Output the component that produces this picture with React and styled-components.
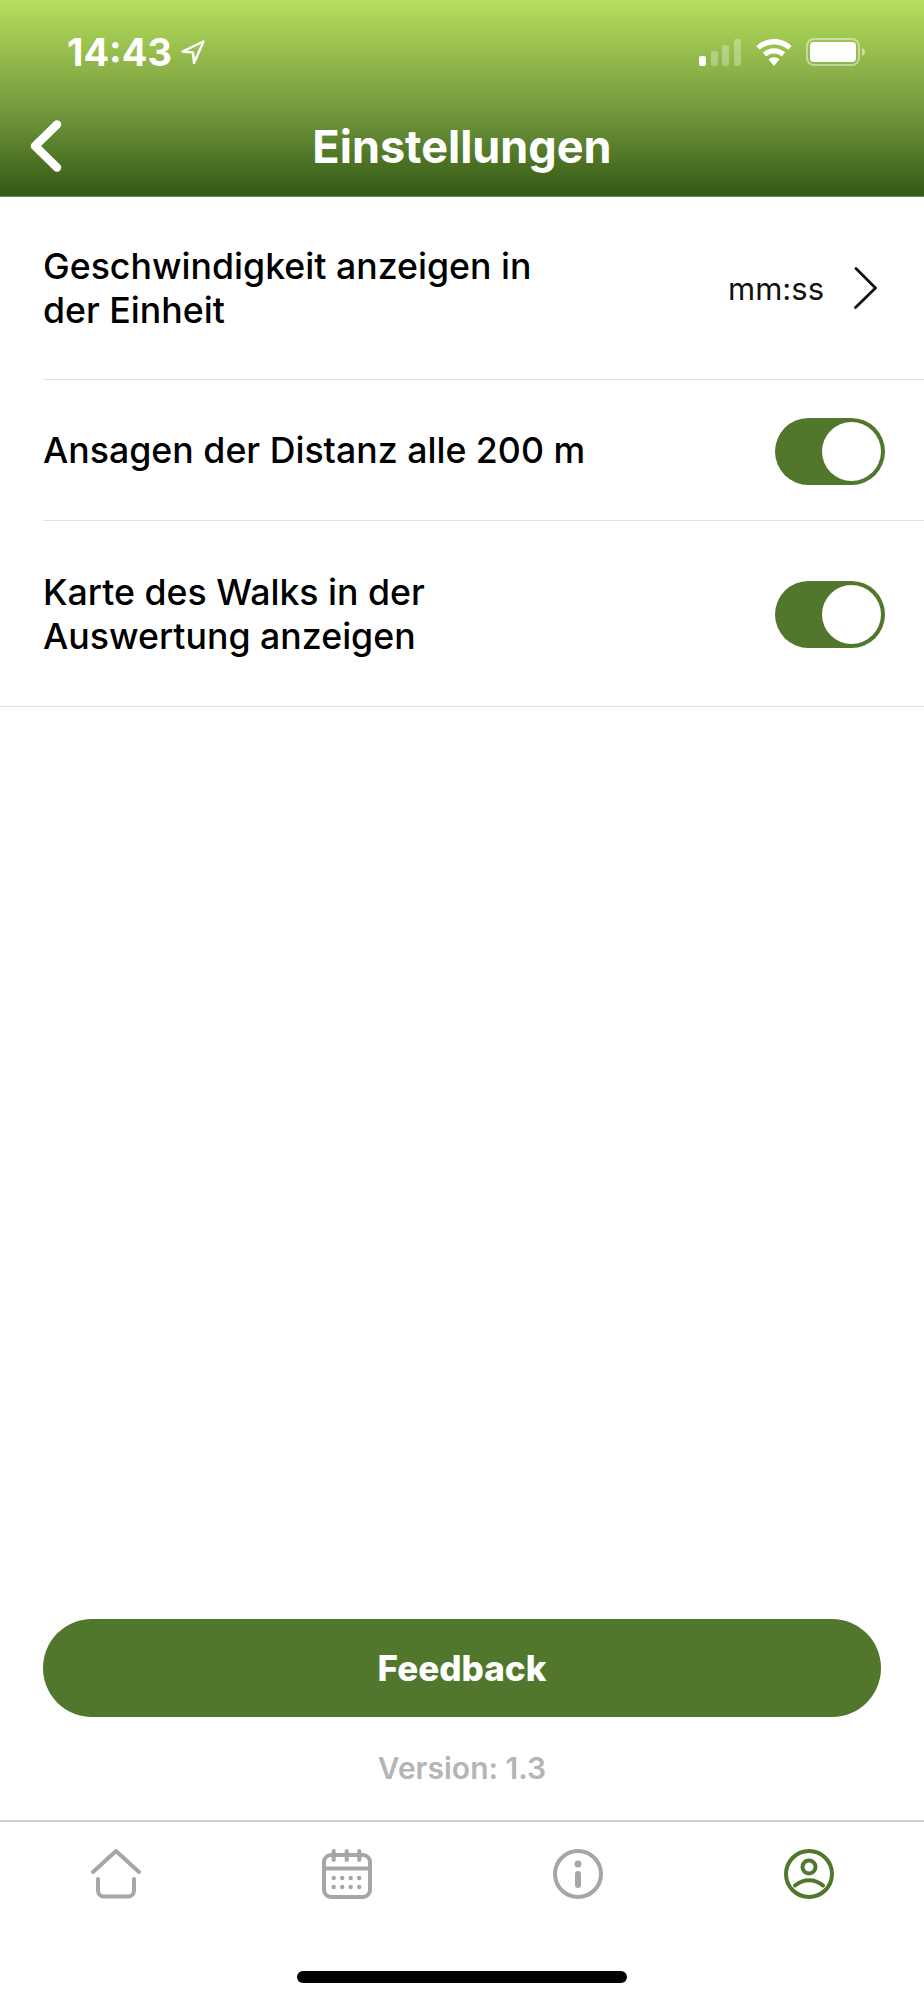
import styled, { createGlobalStyle } from "styled-components";

const GlobalStyle = createGlobalStyle`
  * { box-sizing: border-box; }
  html, body { margin: 0; padding: 0; background: #fff; }
  body { font-family: Inter, "Liberation Sans", sans-serif; }
`;

const GREEN = "#50772b";
const GREY = "#a6a6a6";

const Page = styled.div`
  display: flex;
  flex-direction: column;
  width: 924px;
  height: 2000px;
  background: #fff;
`;

const Header = styled.header`
  height: 197px;
  background: linear-gradient(180deg, #b7df5c 0%, #93b94c 30%, #6b9139 62%, #3c6319 93%, #335a15 100%);
  border-bottom: 1px solid #6f9058;
  color: #fff;
`;

const StatusBar = styled.div`
  display: flex;
  align-items: center;
  justify-content: space-between;
  height: 104px;
  padding: 0 59px 0 67px;
`;

const StatusLeft = styled.div`
  display: flex;
  align-items: center;
  gap: 9px;
`;

const Time = styled.span`
  font-size: 38px;
  font-weight: 700;
`;

const StatusRight = styled.div`
  display: flex;
  align-items: center;
  gap: 14px;
`;

const NavBar = styled.div`
  display: grid;
  grid-template-columns: 1fr auto 1fr;
  align-items: center;
  height: 92px;
  padding: 0 29px 8px;
`;

const Title = styled.h1`
  margin: 0;
  font-size: 45px;
  font-weight: 700;
`;

const SettingRow = styled.div`
  display: flex;
  align-items: center;
  justify-content: space-between;
  height: ${(p) => p.$height}px;
  margin-left: ${(p) => (p.$full ? 0 : 43)}px;
  padding: 0 39px 0 ${(p) => (p.$full ? 43 : 0)}px;
  border-bottom: 1px solid #e2e2e2;
`;

const RowLabel = styled.div`
  max-width: 548px;
  font-size: 35.7px;
  line-height: 44px;
  font-weight: 500;
  color: #000;
`;

const RowValue = styled.div`
  display: flex;
  align-items: center;
  gap: 30px;
  padding-right: 8px;
  font-size: 31px;
  color: #111;
`;

const Toggle = styled.div`
  display: flex;
  justify-content: ${(p) => (p.$on ? "flex-end" : "flex-start")};
  align-items: center;
  width: 110px;
  height: 67px;
  margin-top: 2px;
  padding: 0 4px;
  border-radius: 34px;
  background: ${GREEN};
`;

const Knob = styled.div`
  width: 59px;
  height: 59px;
  border-radius: 50%;
  background: #fff;
`;

const Spacer = styled.div`
  flex: 1;
`;

const FeedbackButton = styled.button`
  display: block;
  height: 98px;
  margin: 0 43px;
  border: 0;
  border-radius: 49px;
  background: ${GREEN};
  color: #fff;
  font-family: inherit;
  font-size: 35px;
  font-weight: 800;
`;

const Version = styled.div`
  height: 103px;
  line-height: 103px;
  text-align: center;
  font-size: 30px;
  font-weight: 600;
  color: #b5b5b5;
`;

const TabBar = styled.nav`
  display: grid;
  grid-template-columns: repeat(4, 1fr);
  padding-top: 27px;
  border-top: 2px solid #cfcfcf;
`;

const Tab = styled.div`
  display: flex;
  justify-content: center;
  color: ${(p) => (p.$active ? GREEN : GREY)};
`;

const HomeBar = styled.div`
  display: flex;
  justify-content: center;
  height: 101px;
  padding-top: 72px;
`;

const HomeIndicator = styled.div`
  width: 330px;
  height: 12px;
  border-radius: 6px;
  background: #000;
`;

const LocationIcon = () => (
  <svg width="24" height="24" viewBox="0 0 24 24" fill="none" stroke="#fff" strokeWidth="2.4" strokeLinejoin="round">
    <path d="M22.5 1.5 1.5 11.5l10.5 1 1 10.5z" />
  </svg>
);

const SignalIcon = () => (
  <svg width="43" height="27" viewBox="0 0 43 27" fill="#fff">
    <rect x="0" y="17" width="7" height="10" rx="2" />
    <rect x="12" y="12" width="7" height="15" rx="2" opacity=".3" />
    <rect x="23" y="6" width="7" height="21" rx="2" opacity=".3" />
    <rect x="35" y="0" width="7" height="27" rx="2" opacity=".3" />
  </svg>
);

const WifiIcon = () => (
  <svg width="36" height="27" viewBox="0 0 36 27" fill="#fff">
    <path d="M18 0C11.2 0 5.1 2.6.4 6.9l3.4 3.9C7.5 7.4 12.5 5.4 18 5.4s10.5 2 14.2 5.4l3.4-3.9C30.9 2.6 24.8 0 18 0z" />
    <path d="M18 9.3c-4.3 0-8.2 1.6-11.2 4.3l3.5 3.9c2-1.9 4.8-3 7.7-3s5.7 1.1 7.7 3l3.5-3.9c-3-2.7-6.9-4.3-11.2-4.3z" />
    <path d="M18 18.3c-2.1 0-4 .8-5.4 2.1L18 27l5.4-6.6c-1.4-1.3-3.3-2.1-5.4-2.1z" />
  </svg>
);

const BatteryIcon = () => (
  <svg width="59" height="28" viewBox="0 0 59 28" fill="none">
    <rect x="1" y="1" width="52" height="26" rx="7" stroke="#fff" strokeOpacity=".45" strokeWidth="2" />
    <rect x="4" y="4" width="46" height="20" rx="4" fill="#fff" />
    <path d="M56 10c1.8.6 3 2.2 3 4s-1.2 3.4-3 4z" fill="#fff" fillOpacity=".5" />
  </svg>
);

const BackIcon = () => (
  <svg width="34" height="54" viewBox="0 0 34 54" fill="none" stroke="#fff" strokeWidth="8.5" strokeLinecap="round" strokeLinejoin="round">
    <path d="M28 5.5 6 27l22 21.5" />
  </svg>
);

const ChevronIcon = () => (
  <svg width="23" height="42" viewBox="0 0 23 42" fill="none" stroke="#111" strokeWidth="2.8" strokeLinecap="round">
    <path d="M2 1.5 21.5 21 1.5 40.5" />
  </svg>
);

const HomeIcon = () => (
  <svg width="50" height="50" viewBox="0 0 50 50" fill="none" stroke="currentColor" strokeWidth="4" strokeLinecap="round" strokeLinejoin="round">
    <path d="M2 23 25 2l23 21" />
    <path d="M7 30v11.5a6 6 0 0 0 6 6h24a6 6 0 0 0 6-6V30" />
  </svg>
);

const CalendarIcon = () => (
  <svg width="50" height="50" viewBox="0 0 50 50" fill="none" stroke="currentColor" strokeWidth="4" strokeLinecap="round">
    <rect x="2" y="6" width="46" height="42" rx="7" />
    <path d="M2 19.5h46" />
    <path d="M11.7 2v9M24.7 2v9M37.3 2v9" />
    <g fill="currentColor" stroke="none">
      {[11.7, 20.2, 28.7, 37.2].map((x) => (
        <g key={x}>
          <circle cx={x} cy="29" r="2.2" />
          <circle cx={x} cy="38" r="2.2" />
        </g>
      ))}
    </g>
  </svg>
);

const InfoIcon = () => (
  <svg width="50" height="50" viewBox="0 0 50 50" fill="none" stroke="currentColor" strokeWidth="4" strokeLinecap="round">
    <circle cx="25" cy="25" r="23" />
    <circle cx="25" cy="15" r="3.5" fill="currentColor" stroke="none" />
    <path d="M25 25v11" strokeWidth="6" />
  </svg>
);

const UserIcon = () => (
  <svg width="50" height="50" viewBox="0 0 50 50" fill="none" stroke="currentColor" strokeWidth="4" strokeLinecap="round">
    <circle cx="25" cy="25" r="23" />
    <circle cx="25" cy="18" r="6.5" />
    <path d="M11 36.5c8.5-7 19.5-7 28 0" />
  </svg>
);

export default function App() {
  return (
    <>
      <GlobalStyle />
      <Page>
        <Header>
          <StatusBar>
            <StatusLeft>
              <Time>14:43</Time>
              <LocationIcon />
            </StatusLeft>
            <StatusRight>
              <SignalIcon />
              <WifiIcon />
              <BatteryIcon />
            </StatusRight>
          </StatusBar>
          <NavBar>
            <BackIcon />
            <Title>Einstellungen</Title>
          </NavBar>
        </Header>

        <SettingRow $height={183}>
          <RowLabel>Geschwindigkeit anzeigen in der Einheit</RowLabel>
          <RowValue>
            mm:ss
            <ChevronIcon />
          </RowValue>
        </SettingRow>
        <SettingRow $height={141}>
          <RowLabel>Ansagen der Distanz alle 200 m</RowLabel>
          <Toggle $on>
            <Knob />
          </Toggle>
        </SettingRow>
        <SettingRow $height={186} $full>
          <RowLabel>Karte des Walks in der Auswertung anzeigen</RowLabel>
          <Toggle $on>
            <Knob />
          </Toggle>
        </SettingRow>

        <Spacer />

        <FeedbackButton>Feedback</FeedbackButton>
        <Version>Version: 1.3</Version>

        <TabBar>
          <Tab><HomeIcon /></Tab>
          <Tab><CalendarIcon /></Tab>
          <Tab><InfoIcon /></Tab>
          <Tab $active><UserIcon /></Tab>
        </TabBar>
        <HomeBar>
          <HomeIndicator />
        </HomeBar>
      </Page>
    </>
  );
}
